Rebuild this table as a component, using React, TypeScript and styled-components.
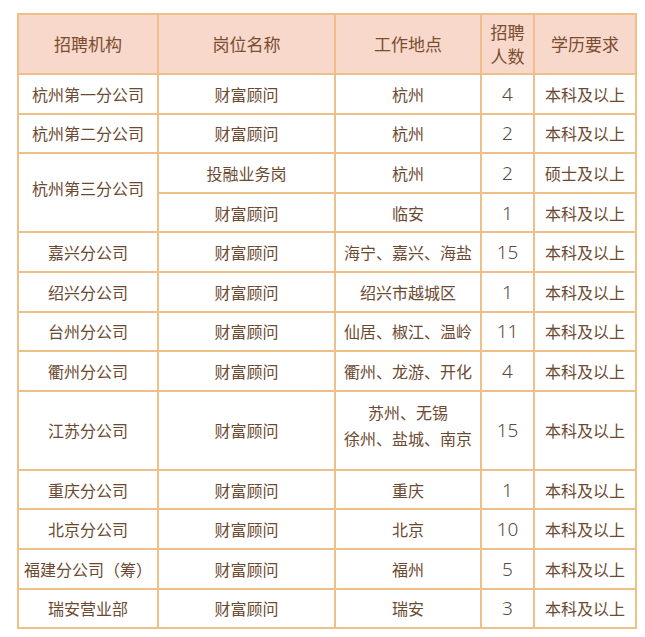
import styled, { createGlobalStyle } from 'styled-components';

type Row = {
  org?: string;
  span?: number;
  post: string;
  place: string[];
  count: number;
  edu: string;
  tall?: boolean;
};

const rows: Row[] = [
  { org: '杭州第一分公司', post: '财富顾问', place: ['杭州'], count: 4, edu: '本科及以上' },
  { org: '杭州第二分公司', post: '财富顾问', place: ['杭州'], count: 2, edu: '本科及以上' },
  { org: '杭州第三分公司', span: 2, post: '投融业务岗', place: ['杭州'], count: 2, edu: '硕士及以上' },
  { post: '财富顾问', place: ['临安'], count: 1, edu: '本科及以上' },
  { org: '嘉兴分公司', post: '财富顾问', place: ['海宁、嘉兴、海盐'], count: 15, edu: '本科及以上' },
  { org: '绍兴分公司', post: '财富顾问', place: ['绍兴市越城区'], count: 1, edu: '本科及以上' },
  { org: '台州分公司', post: '财富顾问', place: ['仙居、椒江、温岭'], count: 11, edu: '本科及以上' },
  { org: '衢州分公司', post: '财富顾问', place: ['衢州、龙游、开化'], count: 4, edu: '本科及以上' },
  {
    org: '江苏分公司',
    post: '财富顾问',
    place: ['苏州、无锡', '徐州、盐城、南京'],
    count: 15,
    edu: '本科及以上',
    tall: true,
  },
  { org: '重庆分公司', post: '财富顾问', place: ['重庆'], count: 1, edu: '本科及以上' },
  { org: '北京分公司', post: '财富顾问', place: ['北京'], count: 10, edu: '本科及以上' },
  { org: '福建分公司（筹）', post: '财富顾问', place: ['福州'], count: 5, edu: '本科及以上' },
  { org: '瑞安营业部', post: '财富顾问', place: ['瑞安'], count: 3, edu: '本科及以上' },
];

const GlobalStyle = createGlobalStyle`
  body {
    margin: 0;
    background: #ffffff;
    font-family: "Noto Sans CJK SC", "Noto Sans", sans-serif;
  }
`;

const Page = styled.div`
  padding: 13px 10px 0 17px;
`;

const Table = styled.table`
  width: 618px;
  border-collapse: collapse;
  table-layout: fixed;
  border: 2px solid #eec087;
`;

const HeadCell = styled.th`
  height: 58px;
  padding: 0;
  background: #f8d8cb;
  border: 2px solid #eec087;
  font-size: 17px;
  font-weight: normal;
  line-height: 24px;
  color: #7a4c30;
  text-align: center;
`;

const BodyRow = styled.tr<{ $tall?: boolean }>`
  height: ${({ $tall }) => ($tall ? '79px' : '39.6px')};
`;

const Cell = styled.td<{ $lift?: boolean }>`
  padding: 0 0 ${({ $lift }) => ($lift ? '10px' : '0')};
  border: 2px solid #eec087;
  font-size: 16px;
  line-height: 26px;
  color: #6c4a32;
  text-align: center;
  white-space: nowrap;
`;

const PlaceLine = styled.div`
  line-height: 26px;
`;

const NumberCell = styled(Cell)`
  font-family: "Noto Sans", "Open Sans", sans-serif;
  font-size: 19px;
  font-weight: 300;
  color: #5b4a40;
`;

export default function App() {
  return (
    <Page>
      <GlobalStyle />
      <Table>
        <colgroup>
          <col style={{ width: 140 }} />
          <col style={{ width: 177 }} />
          <col style={{ width: 146 }} />
          <col style={{ width: 53 }} />
          <col style={{ width: 102 }} />
        </colgroup>
        <thead>
          <tr>
            <HeadCell>招聘机构</HeadCell>
            <HeadCell>岗位名称</HeadCell>
            <HeadCell>工作地点</HeadCell>
            <HeadCell>
              招聘
              <br />
              人数
            </HeadCell>
            <HeadCell>学历要求</HeadCell>
          </tr>
        </thead>
        <tbody>
          {rows.map((row, i) => (
            <BodyRow key={i} $tall={row.tall}>
              {row.org && (
                <Cell rowSpan={row.span} $lift={!!row.span}>
                  {row.org}
                </Cell>
              )}
              <Cell>{row.post}</Cell>
              <Cell $lift={row.tall}>
                {row.place.map((line, j) => (
                  <PlaceLine key={j}>{line}</PlaceLine>
                ))}
              </Cell>
              <NumberCell>{row.count}</NumberCell>
              <Cell>{row.edu}</Cell>
            </BodyRow>
          ))}
        </tbody>
      </Table>
    </Page>
  );
}
